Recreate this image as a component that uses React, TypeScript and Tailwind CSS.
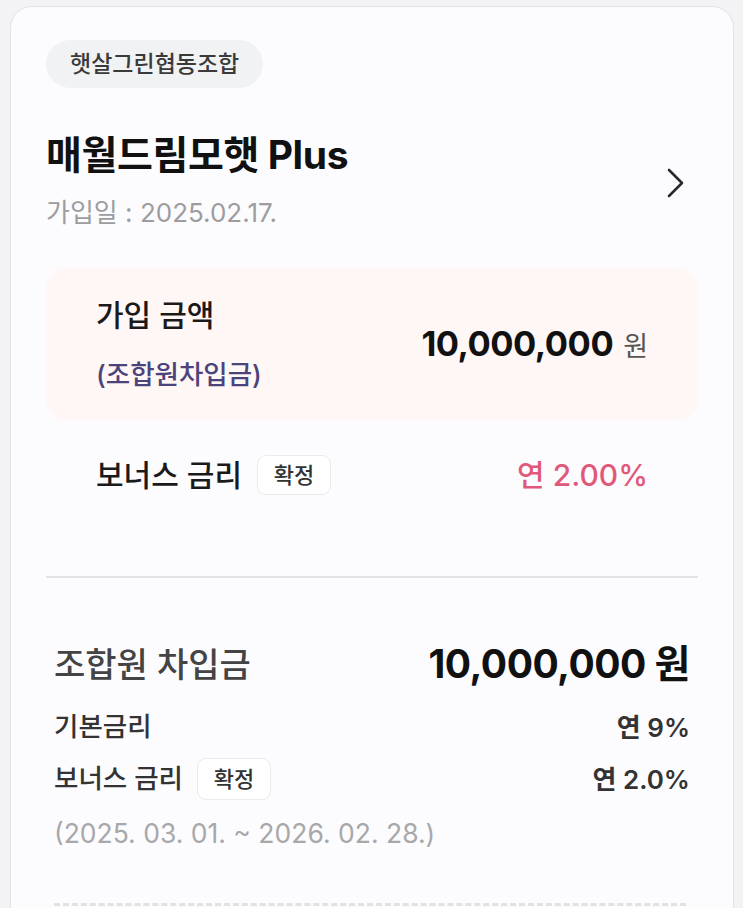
const font = { fontFamily: 'Inter, "Noto Sans CJK KR", sans-serif' };

function Badge({ className }: { className: string }) {
  return (
    <span
      className={`inline-flex items-center justify-center rounded-[9px] border border-[#ebebee] bg-white text-[22px] font-medium text-[#333] ${className}`}
    >
      확정
    </span>
  );
}

function Chevron() {
  return (
    <svg width="20" height="32" viewBox="0 0 20 32" className="mr-[12px] mt-[4px]">
      <polyline
        points="3,3 16,16 3,29"
        fill="none"
        stroke="#2a2a2a"
        strokeWidth="2.6"
        strokeLinecap="round"
        strokeLinejoin="round"
      />
    </svg>
  );
}

export default function App() {
  return (
    <div className="h-[908px] overflow-hidden bg-[#f3f3f6] pt-[6px]" style={font}>
      <div className="ml-[10px] w-[724px] h-[960px] rounded-[22px] border border-[#e4e4e8] bg-[#fcfcfe] px-[35px] pt-[33px]">
        {/* 조합 이름 */}
        <div className="inline-flex h-[48px] items-center rounded-full bg-[#f1f2f4] px-[24px] text-[23px] font-medium text-[#3a3a3a]">
          햇살그린협동조합
        </div>

        {/* 상품명 */}
        <div className="mt-[43px] flex items-center justify-between">
          <div>
            <h1 className="text-[39px] font-bold leading-[48px] tracking-[-0.4px] text-[#111]">
              매월드림모햇 Plus
            </h1>
            <p className="mt-[17px] text-[26px] leading-[34px] text-[#9d9d9f]">
              가입일 : 2025.02.17.
            </p>
          </div>
          <Chevron />
        </div>

        {/* 가입 금액 */}
        <div className="mt-[38px] flex items-center justify-between rounded-[20px] bg-[#fff6f6] pl-[50px] pr-[50px] pt-[28px] pb-[28px]">
          <div>
            <p className="text-[30px] font-medium leading-[38px] text-[#1a1a1a]">가입 금액</p>
            <p className="mt-[22px] text-[26.5px] font-medium leading-[36px] text-[#4b437c]">(조합원차입금)</p>
          </div>
          <p className="flex items-baseline">
            <span className="text-[34.5px] font-bold tracking-[-0.5px] text-[#111]">10,000,000</span>
            <span className="ml-[10px] text-[27px] text-[#555]">원</span>
          </p>
        </div>

        {/* 보너스 금리 */}
        <div className="mt-[35px] flex h-[40px] items-center justify-between pl-[50px] pr-[50px]">
          <div className="flex items-center">
            <span className="text-[30px] font-medium text-[#1a1a1a]">보너스 금리</span>
            <Badge className="ml-[15px] h-[40px] w-[74px]" />
          </div>
          <span className="text-[30px] font-medium text-[#e0597b]">연 2.00%</span>
        </div>

        <div className="mt-[81px] h-[2px] bg-[#e4e4e7]" />

        {/* 조합원 차입금 */}
        <div className="px-[8px]">
          <div className="mt-[64px] flex h-[44px] items-center justify-between">
            <span className="text-[34px] font-medium text-[#444]">조합원 차입금</span>
            <span className="text-[39px] font-bold tracking-[-0.5px] text-[#111]">10,000,000 원</span>
          </div>
          <div className="mt-[24px] flex h-[34px] items-center justify-between text-[26.5px] font-medium text-[#333]">
            <span>기본금리</span>
            <span className="text-[26px] font-semibold">연 9%</span>
          </div>
          <div className="mt-[14px] flex h-[42px] items-center justify-between text-[26.5px] font-medium text-[#333]">
            <div className="flex items-center">
              <span>보너스 금리</span>
              <Badge className="ml-[14px] h-[42px] w-[74px]" />
            </div>
            <span className="text-[26px] font-semibold">연 2.0%</span>
          </div>
          <p className="mt-[16px] h-[34px] text-[26.5px] leading-[34px] text-[#a8a8aa]">
            (2025. 03. 01. ~ 2026. 02. 28.)
          </p>
          <div className="mt-[53px] mr-[4px] border-t-[3px] border-dashed border-[#e2e2e4]" />
        </div>
      </div>
    </div>
  );
}
